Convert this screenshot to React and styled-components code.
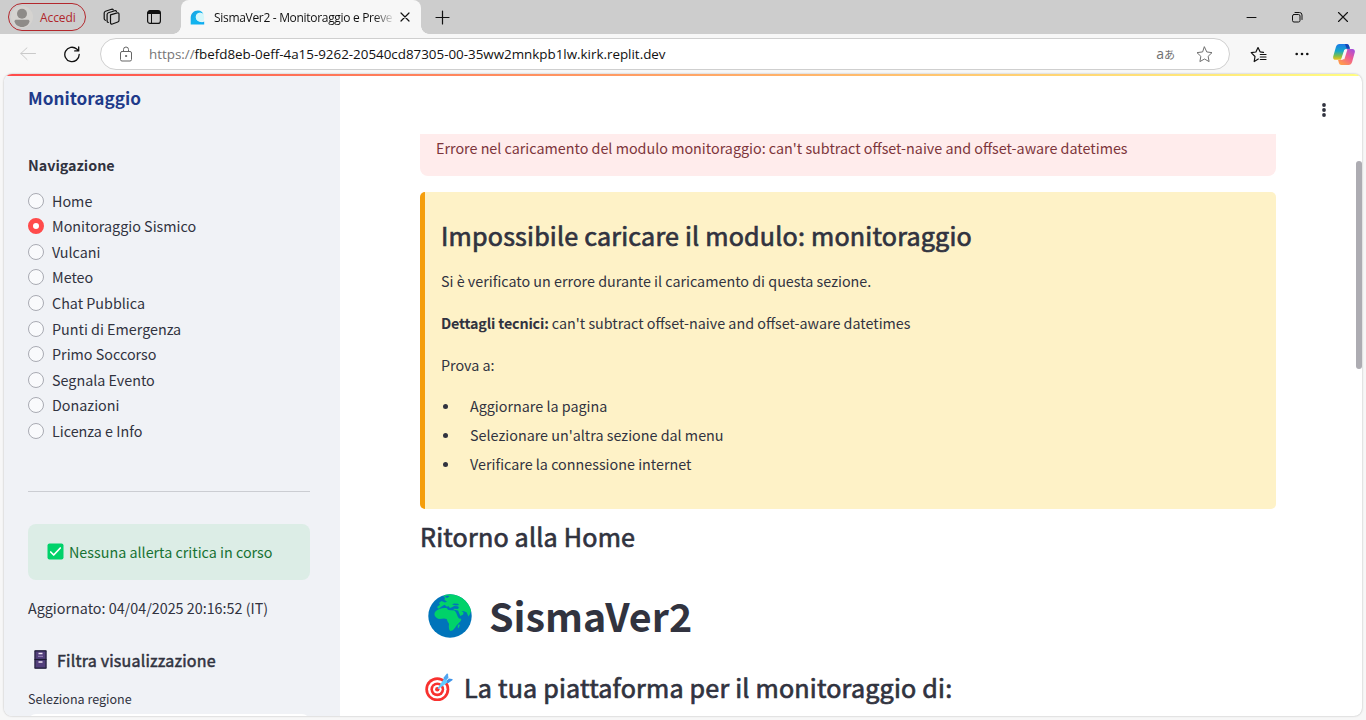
import React from "react";
import styled, { createGlobalStyle } from "styled-components";

const Global = createGlobalStyle`
  * { box-sizing: border-box; }
  body { margin: 0; overflow: hidden; }
  h1, h2, h3, p, ul { margin: 0; padding: 0; font-weight: inherit; }
`;

const Window = styled.div`
  width: 1366px;
  height: 720px;
  display: flex;
  flex-direction: column;
  background: #f7f7f7;
  overflow: hidden;
  font-family: "Noto Sans CJK JP", "Noto Sans CJK SC", sans-serif;
  color: #31333f;
`;

/* ---------- browser chrome ---------- */
const ui = `"Open Sans", "Noto Sans", sans-serif`;

const TitleBar = styled.div`
  height: 34px;
  flex: none;
  display: flex;
  align-items: center;
  background: #cdcdcd;
  padding-left: 8px;
  font-family: ${ui};
`;
const SignIn = styled.div`
  width: 78px;
  height: 28px;
  border: 1px solid #b3282d;
  border-radius: 14px;
  display: flex;
  align-items: center;
  gap: 7px;
  padding-left: 2px;
  color: #b0262b;
  font-size: 12px;
  letter-spacing: -0.1px;
`;
const TitleIcon = styled.div`
  display: flex;
  margin-left: ${(p) => p.$left}px;
`;
const Tab = styled.div`
  align-self: stretch;
  width: 240px;
  margin-left: 20px;
  padding-left: 9px;
  display: flex;
  align-items: center;
  background: #f7f7f7;
  border-radius: 8px 8px 0 0;
  position: relative;
  &::before, &::after {
    content: "";
    position: absolute;
    bottom: 0;
    width: 8px;
    height: 8px;
  }
  &::before { left: -8px; background: radial-gradient(circle at 0 0, transparent 7.5px, #f7f7f7 8px); }
  &::after { right: -8px; background: radial-gradient(circle at 100% 0, transparent 7.5px, #f7f7f7 8px); }
`;
const TabTitle = styled.div`
  width: 179px;
  margin: 0 7px 0 9px;
  white-space: nowrap;
  overflow: hidden;
  font-size: 12px;
  letter-spacing: -0.31px;
  color: #111;
  mask-image: linear-gradient(90deg, #000 160px, transparent 181px);
`;
const Controls = styled.div`
  margin-left: auto;
  display: flex;
  gap: 34px;
  padding-right: 17px;
`;

const Toolbar = styled.div`
  height: 40px;
  flex: none;
  display: flex;
  align-items: center;
  padding-left: 20px;
  font-family: ${ui};
`;
const Glyph = styled.div`
  display: flex;
  flex: none;
  margin-left: ${(p) => p.$left || 0}px;
`;
const Address = styled.div`
  width: 1130px;
  height: 32px;
  margin-left: 20px;
  border: 1px solid #cfcfcf;
  border-radius: 16px;
  background: #fff;
  display: flex;
  align-items: center;
  padding: 0 16px 0 18px;
`;
const Url = styled.div`
  margin-left: 16px;
  flex: 1;
  white-space: nowrap;
  font-size: 13.4px;
  letter-spacing: -0.01px;
  color: #111;
  span { color: #757575; }
`;
const Translate = styled.div`
  color: #707070;
  font-size: 14px;
  line-height: 16px;
  small { font-family: "Noto Sans CJK JP", sans-serif; font-size: 11px; }
`;

/* ---------- page ---------- */
const Page = styled.div`
  position: relative;
  width: 1358px;
  height: 642px;
  margin-left: 4px;
  border-radius: 8px;
  background: #fff;
  box-shadow: 0 0 2px rgba(0, 0, 0, 0.3);
  overflow: hidden;
  display: flex;
`;
const Decoration = styled.div`
  position: absolute;
  inset: 0 0 auto 0;
  height: 2px;
  background: linear-gradient(90deg, #ff4b4b, #fffd80);
`;
const ScrollThumb = styled.div`
  position: absolute;
  right: 0;
  top: 87px;
  width: 6px;
  height: 208px;
  border-radius: 3px;
  background: #adacb2;
`;

const Sidebar = styled.aside`
  width: 336px;
  flex: none;
  background: #f0f2f6;
  padding: 9px 30px 0 24px;
  display: flex;
  flex-direction: column;
  & > * { flex: none; }
`;
const Text = styled.div`
  white-space: nowrap;
  font-size: ${(p) => p.$size || 14.33}px;
  font-weight: ${(p) => p.$weight || 400};
  line-height: ${(p) => p.$line || 26}px;
  letter-spacing: ${(p) => p.$track || 0}px;
  color: ${(p) => p.$color || "inherit"};
  margin-top: ${(p) => p.$top || 0}px;
  b { letter-spacing: -0.18px; }
`;
/* the family has no semibold cut: thicken the regular one */
const SemiBold = styled(Text)`
  font-weight: 400;
  letter-spacing: 0.21px;
  -webkit-text-stroke: ${(p) => p.$stroke}px currentColor;
`;
const RadioList = styled.div`
  margin-top: 10px;
  display: flex;
  flex-direction: column;
`;
const RadioRow = styled.label`
  height: 25.55px;
  display: flex;
  align-items: center;
  gap: 8px;
`;
const Dot = styled.span`
  width: 16px;
  height: 16px;
  border-radius: 50%;
  flex: none;
  border: ${(p) => (p.$on ? "5px solid #ff4b4b" : "1px solid #a9abb3")};
  background: ${(p) => (p.$on ? "#fff" : "#f9fafc")};
`;
const Rule = styled.div`
  height: 1px;
  background: #cbcdd2;
  margin-top: 47.5px;
`;
const Success = styled.div`
  height: 56px;
  margin-top: 32px;
  border-radius: 8px;
  background: #dcede6;
  display: flex;
  align-items: center;
  gap: 5.5px;
  padding-left: 18.5px;
`;
const FilterTitle = styled.div`
  display: flex;
  align-items: center;
  gap: 10px;
  height: 26px;
  padding-left: 6px;
  margin-top: 26px;
`;
const SelectTop = styled.div`
  height: 20px;
  margin-top: 4px;
  border-radius: 8px;
  background: #fff;
`;

const Main = styled.main`
  flex: 1;
  display: flex;
  flex-direction: column;
  padding: 0 86px 0 80px;
  & > * { flex: none; }
`;
const Header = styled.div`
  height: 60px;
  display: flex;
  justify-content: flex-end;
  padding-top: 28px;
  margin-right: -51px;
`;
const ErrorBox = styled.div`
  height: 42px;
  background: #ffecec;
  border-radius: 0 0 8px 8px;
  padding: 1px 16px;
`;
const Warning = styled.section`
  height: 317px;
  margin-top: 16px;
  border-left: 5px solid #f59e0b;
  border-radius: 5px;
  background: #fef2c7;
  padding: 23px 16px 0;
`;
const Bullets = styled.ul`
  list-style: none;
  margin-top: 13px;
`;
const Bullet = styled.li`
  height: 29px;
  display: flex;
  align-items: center;
  gap: 22px;
  padding-left: 2px;
  &::before {
    content: "";
    width: 5px;
    height: 5px;
    border-radius: 50%;
    background: #31333f;
    margin-top: 2px;
  }
`;
const IconHeading = styled.div`
  display: flex;
  align-items: flex-start;
  gap: ${(p) => p.$gap}px;
  height: ${(p) => p.$h}px;
  margin-top: ${(p) => p.$top}px;
  padding-left: ${(p) => p.$pad}px;
  svg { margin-top: ${(p) => p.$drop}px; }
`;

/* ---------- icons ---------- */
const Line = ({ w, h, c = "#111", sw = 1, children }) => (
  <svg width={w} height={h} viewBox={`0 0 ${w} ${h}`} fill="none" stroke={c} strokeWidth={sw} strokeLinecap="round" strokeLinejoin="round">
    {children}
  </svg>
);
const Avatar = () => (
  <svg width="22" height="22" viewBox="0 0 22 22">
    <circle cx="11" cy="11" r="11" fill="#d5d3d0" />
    <circle cx="11" cy="7.7" r="5" fill="#8e8b88" />
    <path d="M3.5 15.5c0-1.2.8-1.8 1.8-1.8h11.4c1 0 1.8.6 1.8 1.8-.9 3.2-3.700 5.500-7.500 5.500s-6.600-2.300-7.500-5.500z" fill="#8e8b88" />
  </svg>
);
const Workspaces = () => (
  <Line w={18} h={18} sw={1.2}>
    <path d="M7.500 6.800l6.800-1.900c.9-.25 1.700.3 1.700 1.200v6.200c0 .8-.4 1.400-1.200 1.700l-5.400 2c-1 .35-1.900-.2-1.900-1.200z" />
    <path d="M5.300 14.500c-.9-.2-1.200-.7-1.200-1.500V6.500c0-.9.4-1.500 1.300-1.800l6.400-2c.8-.2 1.400.1 1.700.8" />
    <path d="M2.500 12.300C1.500 12 1.200 11.500 1.200 10.700V5c0-.9.4-1.500 1.300-1.800l6-1.900c.8-.2 1.400 0 1.800.6" />
  </Line>
);
const VerticalTabs = () => (
  <svg width="14" height="14" viewBox="0 0 14 14">
    <rect x=".6" y=".6" width="12.800" height="12.800" rx="2.500" fill="none" stroke="#111" strokeWidth="1.200" />
    <path d="M.6 3.900V3A2.400 2.400 0 0 1 3 .6h8A2.400 2.400 0 0 1 13.400 3v.9z" fill="#111" />
    <path d="M4.500 4v9" stroke="#111" strokeWidth="1" />
  </svg>
);
const Favicon = () => (
  <svg width="15" height="15" viewBox="0 0 15 15">
    <defs>
      <linearGradient id="fav" x1="0" y1="0" x2="1" y2="1">
        <stop offset="0" stopColor="#1c9fe0" />
        <stop offset=".5" stopColor="#12b5ee" />
        <stop offset="1" stopColor="#0cabf2" />
      </linearGradient>
    </defs>
    <path d="M8 .5C3.500.5.700 3.700.700 8v6.500h13.500v-3c-1 .6-2.300.8-3.500.5-3-.5-4.900-2.500-4.900-4.900 0-2.600 2-4.300 4.300-4.300 1.500 0 2.700.7 3.400 1.900C13 2.200 11 .5 8 .5z" fill="url(#fav)" />
    <path d="M5.800 7.200c0-2.600 2-4.400 4.300-4.400 1.500 0 2.700.8 3.400 2 .8 1.600.8 4.200.3 5.700-.8 1-2 1.500-3.300 1.300-2.800-.4-4.700-2.300-4.700-4.600z" fill="#d4f7fb" />
  </svg>
);
const Star = ({ c = "#707070" }) => (
  <Line w={17} h={17} c={c}>
    <path d="M8.500 1l2.250 4.950 5.250.7-3.850 3.650.95 5.300L8.500 13l-4.600 2.600.95-5.300L1 6.650l5.250-.7z" />
  </Line>
);
const Favorites = () => (
  <Line w={17} h={17} sw={1.200}>
    <path d="M8.300 13l-4.100 2.500.8-5L1.200 6.700l4.700-.7L8 1.500l2.100 4.300 3.400.5M10.300 8.500h5.700M10.300 11h5.700M10.300 13.500h5.700" />
  </Line>
);
const Copilot = () => (
  <svg width="22" height="21" viewBox="0 0 22 21">
    <defs>
      <linearGradient id="cpl" x1="0" y1="0" x2="0" y2="1">
        <stop offset="0" stopColor="#1d7be8" />
        <stop offset=".45" stopColor="#14a8c9" />
        <stop offset=".75" stopColor="#7fbe4a" />
        <stop offset="1" stopColor="#f3c21c" />
      </linearGradient>
      <linearGradient id="cpr" x1="1" y1="0" x2=".3" y2="1">
        <stop offset="0" stopColor="#9a4de8" />
        <stop offset=".5" stopColor="#ee5a94" />
        <stop offset="1" stopColor="#ff9a4d" />
      </linearGradient>
    </defs>
    <path d="M6.500 0h7c1.500 0 2.200.8 2.600 2l.8 2.800h-3c-1.400 0-2.200.8-2.600 2l-2.200 7.100c-.5 1.300-1.300 1.900-2.500 1.900H2.500C.700 15.800-.200 14.400.200 12.600L2.900 2.900C3.500 1 4.700 0 6.500 0z" fill="url(#cpl)" />
    <path d="M12 0h1.500c1.500 0 2.200.8 2.600 2l.8 2.800h-3.200z" fill="#1644b5" />
    <path d="M15.500 21h-7c-1.500 0-2.200-.8-2.600-2l-.8-3h3c1.400 0 2.200-.8 2.600-2l2.200-7.100c.5-1.300 1.300-1.900 2.500-1.900h4.100c1.800 0 2.700 1.400 2.300 3.200l-2.700 9.900c-.6 1.900-1.800 2.900-3.600 2.900z" fill="url(#cpr)" />
    <path d="M11.300 5.800h3l-2.900 9.500H8.200z" fill="#f7f7f7" />
  </svg>
);
const Check = () => (
  <svg width="17" height="17" viewBox="0 0 17 17">
    <rect x=".5" y=".5" width="16" height="16" rx="2" fill="#00d26a" />
    <path d="M3.700 9l3 3 6.600-7" fill="none" stroke="#fff" strokeWidth="1.700" strokeLinecap="round" strokeLinejoin="round" />
  </svg>
);
const Cabinet = () => (
  <svg width="13" height="19" viewBox="0 0 13 19">
    <rect x=".5" y=".5" width="12" height="18" rx="1" fill="#433b6b" />
    <path d="M1 1v17M12 1v17" stroke="#2a2440" strokeWidth="1" />
    <rect x="2" y="2" width="9" height="6.500" fill="#533f7c" />
    <rect x="2" y="10.500" width="9" height="6.500" fill="#533f7c" />
    <path d="M.5 9.500h12M.5.800h12M.5 18.200h12" stroke="#1c1733" strokeWidth="1" />
    <path d="M4.500 3.500h4M4.500 12h4" stroke="#f3e9f8" strokeWidth="1.500" />
    <path d="M4 6.300h5" stroke="#9c8cba" strokeWidth="1" />
  </svg>
);
const Globe = () => (
  <svg width="44" height="44" viewBox="0 0 44 44">
    <defs><clipPath id="globe"><circle cx="22" cy="22" r="21.700" /></clipPath></defs>
    <circle cx="22" cy="22" r="21.700" fill="#0074ba" />
    <g clipPath="url(#globe)" fill="#00d26a">
      <path d="M15.500 2.500l1.500 1-.5 2.500 2.500 1.500-2 1-3.500-1.500-2.500 2 1 1.800-2.500 1.700c-.5 1.300.3 2.200 1.500 2l3-2.200 2.500-1.500 2.500 2 1.300-.8 1.700 2 2.500-1 1.500-1 4 .3 1 1.500-1.300 1.300-4.200-.3.300 1 4.300.7 1.400 3.500 1 2 2.700-1.500.300-2-2-1.500 2.500.300 2.500 1 2 4.200 1.500-2.500L44 14 36 0H17z" />
      <path d="M11 15.200c2.500-1.200 5-1.500 7.500-1.200l1.800 2 2.700.3 3.500.2 1.500 2 1.800 4.200 1.200 1.800 2 .2c.5.900 0 1.800-1 3l-3.500 3.700-1.500 2.300-2.200 2.500-2.300.8c-1.500-.5-1.500-2.500-1.700-4.200l.2-3-1.500-2.500-.8-2.300-2.700-.5-5 .5c-2.700-.7-4.500-2.700-4.600-5 .3-2.500 2.400-4 4.600-4.800z" />
      <path d="M30 31c1-.8 1.900-.4 1.600.8l-.9 2c-1.100.4-1.300-.8-.7-2.800z" />
    </g>
    <path d="M16.500 2.500l3.500-1 1.500 1-2.500 1.500zM24 10.500l2-1 4 .3 1 1.200-3 .5z" fill="#0074ba" />
  </svg>
);
const Target = () => (
  <svg width="28" height="28" viewBox="0 0 28 28">
    <circle cx="12.300" cy="16.300" r="12" fill="#f8312f" />
    <circle cx="12.300" cy="16.300" r="9.300" fill="#fff" />
    <circle cx="12.300" cy="16.300" r="6.900" fill="#f8312f" />
    <circle cx="12.300" cy="16.300" r="4.300" fill="#fff" />
    <circle cx="12.300" cy="16.300" r="2.200" fill="#f8312f" />
    <path d="M18.500 8.200l.2-3.700 3-3.700c.6-.6 1.200-.4 1.300.4l.4 3.600-4.400 5z" fill="#50a5f0" />
    <path d="M19.500 9.800l4.400-4.400 3.100.5c.8.200.9.8.3 1.300l-3.800 2.900-4 .2z" fill="#3f93e8" />
    <path d="M12.800 15l4.700-7 1.500-2 2.500 1 .8 2.300-2 2-6.500 4.500c-.8.400-1.500-.1-1-.8z" fill="#62cbff" />
  </svg>
);

const SECTIONS = [
  "Home", "Monitoraggio Sismico", "Vulcani", "Meteo", "Chat Pubblica",
  "Punti di Emergenza", "Primo Soccorso", "Segnala Evento", "Donazioni", "Licenza e Info",
];
const TIPS = ["Aggiornare la pagina", "Selezionare un'altra sezione dal menu", "Verificare la connessione internet"];

export default function App() {
  return (
    <Window>
      <Global />
      <TitleBar>
        <SignIn><Avatar />Accedi</SignIn>
        <TitleIcon $left={17}><Workspaces /></TitleIcon>
        <TitleIcon $left={26}><VerticalTabs /></TitleIcon>
        <Tab>
          <Favicon />
          <TabTitle>SismaVer2 - Monitoraggio e Preve</TabTitle>
          <Line w={10} h={10} sw={1.200}><path d="M1 1l8 8M9 1l-8 8" /></Line>
        </Tab>
        <TitleIcon $left={14}><Line w={15} h={15} sw={1.200}><path d="M7.500 1v13M1 7.500h13" /></Line></TitleIcon>
        <Controls>
          <Line w={12} h={12}><path d="M2 6.500h9" /></Line>
          <Line w={12} h={12}>
            <rect x="1.500" y="3.500" width="7.500" height="7.500" rx="1.500" />
            <path d="M4 1.500h4.500a2.500 2.500 0 0 1 2.500 2.500v4.500" />
          </Line>
          <Line w={12} h={12} sw={1.100}><path d="M1.500 1.500l9 9M10.500 1.500l-9 9" /></Line>
        </Controls>
      </TitleBar>

      <Toolbar>
        <Glyph><Line w={16} h={14} c="#c9c9c9"><path d="M15.500 6.500H.8M7 .8L.8 6.500 7 12.500" /></Line></Glyph>
        <Glyph $left={28}>
          <Line w={16} h={17} sw={1.300}>
            <path d="M15.200 8.500a7.200 7.200 0 1 1-2.500-5.500l2 1.800M14.700 1v3.900h-4" />
          </Line>
        </Glyph>
        <Address>
          <Line w={14} h={16} c="#666">
            <rect x="1.500" y="5.500" width="11" height="9.500" rx="1.500" />
            <path d="M4.500 5.500V3.500a2.500 2.500 0 0 1 5 0v2" />
            <circle cx="7" cy="10" r=".6" fill="#666" />
          </Line>
          <Url><span>https://</span>fbefd8eb-0eff-4a15-9262-20540cd87305-00-35ww2mnkpb1lw.kirk.replit.dev</Url>
          <Translate>a<small>あ</small></Translate>
          <Glyph $left={21}><Star /></Glyph>
        </Address>
        <Glyph $left={20}><Favorites /></Glyph>
        <Glyph $left={28}>
          <svg width="14" height="4" viewBox="0 0 14 4" fill="#111">
            <circle cx="1.700" cy="2" r="1.300" /><circle cx="7" cy="2" r="1.300" /><circle cx="12.300" cy="2" r="1.300" />
          </svg>
        </Glyph>
        <Glyph $left={24}><Copilot /></Glyph>
      </Toolbar>

      <Page>
        <Sidebar>
          <Text as="h2" $size={17.200} $weight={700} $line={30} $color="#1e3a8a">Monitoraggio</Text>
          <Text $weight={700} $top={39}>Navigazione</Text>
          <RadioList>
            {SECTIONS.map((name, i) => (
              <RadioRow key={name}><Dot $on={i === 1} /><Text>{name}</Text></RadioRow>
            ))}
          </RadioList>
          <Rule />
          <Success><Check /><Text $color="#177233">Nessuna allerta critica in corso</Text></Success>
          <Text $top={15}>Aggiornato: 04/04/2025 20:16:52 (IT)</Text>
          <FilterTitle><Cabinet /><SemiBold as="h3" $size={16} $stroke={0.5}>Filtra visualizzazione</SemiBold></FilterTitle>
          <Text $size={12.540} $line={22} $top={15}>Seleziona regione</Text>
          <SelectTop />
        </Sidebar>
        <Main>
          <Header>
            <svg width="6" height="16" viewBox="0 0 6 16" fill="#31333f">
              <circle cx="3" cy="3" r="1.900" /><circle cx="3" cy="8" r="1.900" /><circle cx="3" cy="13" r="1.900" />
            </svg>
          </Header>
          <ErrorBox>
            <Text $color="#7d353b">Errore nel caricamento del modulo monitoraggio: can't subtract offset-naive and offset-aware datetimes</Text>
          </ErrorBox>
          <Warning>
            <SemiBold as="h3" $size={25.080} $stroke={0.7} $line={40}>Impossibile caricare il modulo: monitoraggio</SemiBold>
            <Text as="p" $top={13}>Si è verificato un errore durante il caricamento di questa sezione.</Text>
            <Text as="p" $top={16}><b>Dettagli tecnici:</b> can't subtract offset-naive and offset-aware datetimes</Text>
            <Text as="p" $top={16}>Prova a:</Text>
            <Bullets>
              {TIPS.map((tip) => <Bullet key={tip}><Text>{tip}</Text></Bullet>)}
            </Bullets>
          </Warning>
          <SemiBold as="h3" $size={25.080} $stroke={0.7} $line={40} $top={7}>Ritorno alla Home</SemiBold>
          <IconHeading $h={52} $top={33} $pad={8} $gap={17} $drop={5}>
            <Globe /><Text as="h1" $size={39.400} $weight={700} $line={52}>SismaVer2</Text>
          </IconHeading>
          <IconHeading $h={40} $top={26} $pad={5} $gap={11} $drop={6}>
            <Target /><SemiBold as="h3" $size={25.080} $stroke={0.7} $line={40}>La tua piattaforma per il monitoraggio di:</SemiBold>
          </IconHeading>
        </Main>
        <Decoration />
        <ScrollThumb />
      </Page>
    </Window>
  );
}
